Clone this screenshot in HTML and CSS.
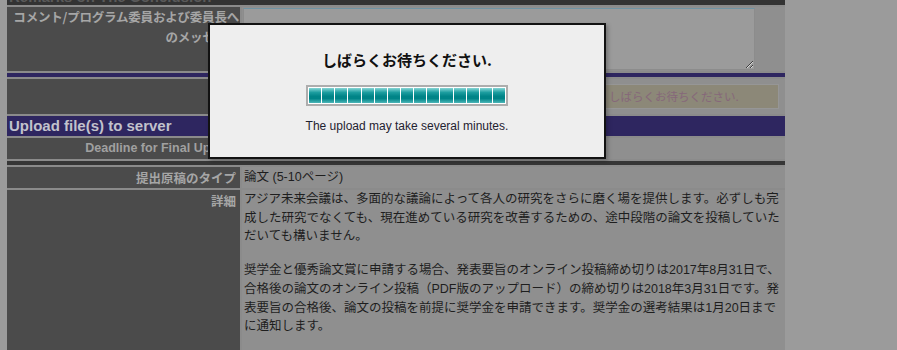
FILE: index.html
```html
<!DOCTYPE html>
<html lang="ja">
<head>
<meta charset="utf-8">
<title>Upload</title>
<link rel="stylesheet" href="styles.css">
</head>
<body>
<div class="sheet">
  <div class="strip"><span class="strip-text">Remarks on The Conclusion</span></div>

  <div class="row row-msg">
    <div class="th th-msg">コメント/プログラム委員および委員長へ<br>のメッセージ</div>
    <div class="td td-msg"><textarea class="memo"></textarea></div>
  </div>

  <div class="bar"></div>

  <div class="row row-btn">
    <div class="th"></div>
    <div class="td td-btn"><div class="waitbox">しばらくお待ちください.</div></div>
  </div>

  <div class="section">Upload file(s) to server</div>

  <div class="row row-deadline">
    <div class="th th-en">Deadline for Final Upload</div>
    <div class="td"></div>
  </div>

  <div class="darkbar"></div>

  <div class="row row-type">
    <div class="th">提出原稿のタイプ</div>
    <div class="td">論文 (5-10ページ)</div>
  </div>

  <div class="row row-detail">
    <div class="th">詳細</div>
    <div class="td">
      <p class="para">アジア未来会議は、多面的な議論によって各人の研究をさらに磨く場を提供します。必ずしも完<br>成した研究でなくても、現在進めている研究を改善するための、途中段階の論文を投稿していた<br>だいても構いません。</p>
      <p class="para">奨学金と優秀論文賞に申請する場合、発表要旨のオンライン投稿締め切りは2017年8月31日で、<br>合格後の論文のオンライン投稿（PDF版のアップロード）の締め切りは2018年3月31日です。発<br>表要旨の合格後、論文の投稿を前提に奨学金を申請できます。奨学金の選考結果は1月20日まで<br>に通知します。</p>
    </div>
  </div>
</div>

<div class="modal">
  <div class="modal-title">しばらくお待ちください.</div>
  <div class="progress">
    <span class="seg"></span><span class="seg"></span><span class="seg"></span><span class="seg"></span><span class="seg"></span>
    <span class="seg"></span><span class="seg"></span><span class="seg"></span><span class="seg"></span><span class="seg"></span>
    <span class="seg"></span><span class="seg"></span><span class="seg"></span><span class="seg"></span><span class="seg"></span>
  </div>
  <div class="modal-note">The upload may take several minutes.</div>
</div>
</body>
</html>
```

FILE: styles.css
```css
html, body {
  margin: 0;
  padding: 0;
  background: #9b9b9b;
  height: 100%;
  overflow: hidden;
}

body {
  font-family: "Liberation Sans", "Noto Sans CJK JP", sans-serif;
  color: #1e1e1e;
}

.sheet {
  margin-left: 7px;
  width: 778px;
  background: #8b8b8b;
  display: flex;
  flex-direction: column;
  gap: 2px;
}

.strip {
  height: 5px;
  overflow: hidden;
  background: #333333;
}

.strip-text {
  display: block;
  margin-top: -12px;
  padding-left: 2px;
  font-size: 15px;
  line-height: 17px;
  font-weight: bold;
  color: #5a5a5a;
}

.row {
  display: grid;
  grid-template-columns: 233px 1fr;
  gap: 2px;
}

.th {
  background: #4b4b4b;
  color: #a6a6a6;
  font-weight: bold;
  font-size: 12.5px;
  line-height: 19px;
  text-align: right;
  padding: 1px 4px 0 2px;
  font-family: "Noto Sans CJK JP", "Liberation Sans", sans-serif;
}

.td {
  background: #8f8f8f;
  font-size: 12.5px;
  line-height: 18.7px;
  padding: 0 2px;
}

.row-msg {
  height: 64px;
}

.th-msg {
  white-space: nowrap;
  padding: 0 1px 0 0;
  line-height: 19.5px;
  letter-spacing: -0.2px;
}

.td-msg {
  padding: 1px 0 0 1px;
}

.memo {
  display: block;
  box-sizing: border-box;
  width: 512px;
  height: 62px;
  margin: 0;
  padding: 2px;
  background: #9b9b9b;
  border: 1px solid #8c8c8c;
  border-top-color: #6f93a3;
  resize: both;
}

.bar {
  height: 4px;
  background: #2e2660;
}

.row-btn {
  height: 35px;
}

.td-btn {
  display: flex;
  align-items: center;
  justify-content: flex-end;
  padding: 0 6px 0 0;
}

.waitbox {
  box-sizing: border-box;
  width: 179px;
  height: 25px;
  background: #8c8878;
  border: 1px solid #969696;
  color: #86677a;
  font-family: "Noto Sans CJK JP", sans-serif;
  font-size: 11.5px;
  line-height: 23px;
  padding-left: 8px;
}

.section {
  height: 20px;
  background: #2e2660;
  color: #c2c2cc;
  font-weight: bold;
  font-size: 15px;
  line-height: 20px;
  padding-left: 2px;
}

.row-deadline {
  height: 21px;
}

.th-en {
  font-family: "Liberation Sans", sans-serif;
  font-size: 12.5px;
  line-height: 19px;
  color: #a0a0a0;
}

.darkbar {
  height: 4px;
  background: #363636;
}

.row-type {
  height: 21px;
}

.row-type .td {
  line-height: 20px;
}

.row-detail {
  height: 200px;
}

.row-detail .td {
  padding-top: 0;
}

.para {
  margin: 0 0 15px 0;
}

.modal {
  position: absolute;
  left: 208px;
  top: 23px;
  width: 394px;
  height: 132px;
  background: #eeeeee;
  border: 2px solid #121212;
  box-shadow: 2px 2px 4px rgba(0, 0, 0, 0.25);
  display: flex;
  flex-direction: column;
  align-items: center;
}

.modal-title {
  margin-top: 24px;
  font-family: "Noto Sans CJK JP", sans-serif;
  font-weight: bold;
  font-size: 15px;
  line-height: 22px;
  color: #111111;
}

.progress {
  margin-top: 14px;
  display: flex;
  gap: 1px;
  width: 196px;
  padding: 1px;
  background: #ffffff;
  border: 2px solid #adadad;
}

.seg {
  flex: 1;
  height: 15px;
  background: linear-gradient(#86d6d6 0%, #1c9d9f 30%, #008487 55%, #008487 70%, #4cb6b8 100%);
}

.modal-note {
  margin-top: 13px;
  font-size: 12px;
  line-height: 14px;
  color: #1f2230;
}
```
